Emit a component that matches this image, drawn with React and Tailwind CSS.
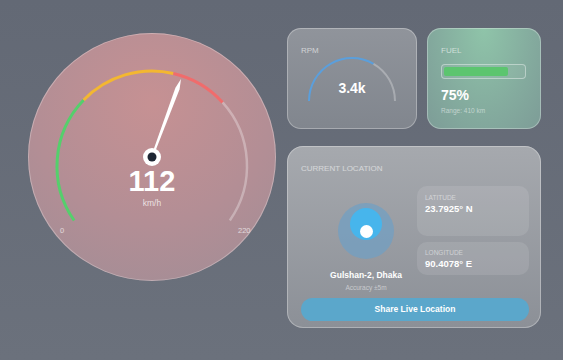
export default function App() {
  return (
    <div className="w-[563px] h-[360px] overflow-hidden bg-gradient-to-b from-[#636975] to-[#6b717c] flex pl-[28px] pt-[28px] gap-[11px] font-['Liberation_Sans',Arial,sans-serif]">
      {/* Speed gauge */}
      <div className="relative w-[248px] h-[248px] mt-[5px] shrink-0 rounded-full overflow-hidden bg-[radial-gradient(circle_at_50%_28%,#c69193_0%,#b38e95_55%,#a08d96_100%)] shadow-[inset_0_0_0_1px_rgba(255,255,255,0.28)]">
        <svg className="absolute inset-0" width="248" height="248" viewBox="0 0 248 248">
          <path d="M 46.18 187.49 A 95 95 0 0 1 55.67 66.99" fill="none" stroke="#55cf6c" strokeWidth="3" />
          <path d="M 55.67 66.99 A 95 95 0 0 1 145.37 40.43" fill="none" stroke="#f3b731" strokeWidth="3" />
          <path d="M 145.37 40.43 A 95 95 0 0 1 194.6 69.43" fill="none" stroke="#f06c6c" strokeWidth="3" />
          <path d="M 194.6 69.43 A 95 95 0 0 1 201.82 187.49" fill="none" stroke="rgba(255,255,255,0.3)" strokeWidth="2.5" />
          <polygon points="153,46 151.56,56.17 124.94,124.35 123.06,123.65 147.44,54.63" fill="#ffffff" />
          <circle cx="124" cy="124" r="9" fill="#ffffff" />
          <circle cx="124" cy="124" r="4.5" fill="#1e2633" />
        </svg>
        <div className="absolute left-0 right-0 top-[135px] text-center text-white font-bold text-[29px] leading-[26px]">112</div>
        <div className="absolute left-0 right-0 top-[165.5px] text-center text-white/75 text-[8.5px] leading-[8px]">km/h</div>
        <div className="absolute left-[32px] top-[193px] text-white/65 text-[7.5px] leading-[10px]">0</div>
        <div className="absolute left-[210px] top-[193px] text-white/65 text-[7.5px] leading-[10px]">220</div>
      </div>

      {/* Right column */}
      <div className="w-[254px] flex flex-col gap-[17px]">
        <div className="flex gap-[10px]">
          {/* RPM */}
          <div className="relative w-[130px] h-[101px] rounded-[14px] bg-gradient-to-b from-[#90949b] to-[#81868e] shadow-[inset_0_0_0_1px_rgba(255,255,255,0.3)] px-[14px] pt-[18px]">
            <div className="text-[8px] leading-[10px] text-white/60">RPM</div>
            <svg className="absolute inset-0" width="130" height="101" viewBox="0 0 130 101">
              <path d="M 22 73 A 43 43 0 0 1 86.5 35.76" fill="none" stroke="#5b9fdc" strokeWidth="2" />
              <path d="M 86.5 35.76 A 43 43 0 0 1 108 73" fill="none" stroke="rgba(255,255,255,0.28)" strokeWidth="2" />
            </svg>
            <div className="absolute left-0 right-0 top-[52px] text-center text-white font-bold text-[14px] leading-[16px]">3.4k</div>
          </div>
          {/* Fuel */}
          <div className="w-[114px] h-[101px] rounded-[14px] bg-[radial-gradient(ellipse_at_50%_0%,#8fc4a9_0%,#84ab9e_60%,#7d9c97_100%)] shadow-[inset_0_0_0_1px_rgba(255,255,255,0.3)] px-[14px] pt-[18px]">
            <div className="text-[8px] leading-[10px] text-white/60">FUEL</div>
            <div className="mt-[8px] w-[85px] h-[15px] rounded-[4px] border border-white/40 bg-white/5 p-[2px]">
              <div className="h-full w-[64px] rounded-[2px] bg-[#5cc56f]" />
            </div>
            <div className="mt-[8px] text-white font-bold text-[14px] leading-[16px]">75%</div>
            <div className="mt-[4px] text-white/50 text-[6.5px] leading-[8px]">Range: 410 km</div>
          </div>
        </div>

        {/* Location */}
        <div className="w-[254px] h-[182px] rounded-[16px] bg-gradient-to-b from-[#a6a9ae] to-[#8c9097] shadow-[inset_0_0_0_1px_rgba(255,255,255,0.3)] pl-[14px] pr-[12px] pt-[18px] pb-[7px] flex flex-col">
          <div className="text-[8px] leading-[10px] text-white/55">CURRENT LOCATION</div>
          <div className="mt-[12px] flex">
            <div className="w-[116px] pl-[14px] pt-[17px] flex flex-col items-center">
              <div className="relative w-[56px] h-[56px] rounded-full bg-[#6f9fc4]/70">
                <div className="absolute left-[12px] top-[5px] w-[32px] h-[32px] rounded-full bg-[#47b5ec]" />
                <div className="absolute left-[21.5px] top-[21.5px] w-[13px] h-[13px] rounded-full bg-white" />
              </div>
              <div className="mt-[11px] text-white font-bold text-[8.5px] leading-[11px] whitespace-nowrap">Gulshan-2, Dhaka</div>
              <div className="mt-[2.5px] text-white/50 text-[6.5px] leading-[8px] whitespace-nowrap">Accuracy ±5m</div>
            </div>
            <div className="flex-1 flex flex-col gap-[6px]">
              <div className="h-[50px] rounded-[10px] bg-white/10 px-[8px] pt-[8px]">
                <div className="text-[6.5px] leading-[8px] text-white/50">LATITUDE</div>
                <div className="mt-[1px] text-white font-bold text-[9.5px] leading-[12px]">23.7925° N</div>
              </div>
              <div className="h-[33px] rounded-[10px] bg-white/10 px-[8px] pt-[7px]">
                <div className="text-[6.5px] leading-[8px] text-white/50">LONGITUDE</div>
                <div className="mt-[1px] text-white font-bold text-[9.5px] leading-[12px]">90.4078° E</div>
              </div>
            </div>
          </div>
          <div className="mt-auto w-full h-[23px] rounded-full bg-[#5ba7cb] flex items-center justify-center text-white font-bold text-[8.5px]">Share Live Location</div>
        </div>
      </div>
    </div>
  );
}
